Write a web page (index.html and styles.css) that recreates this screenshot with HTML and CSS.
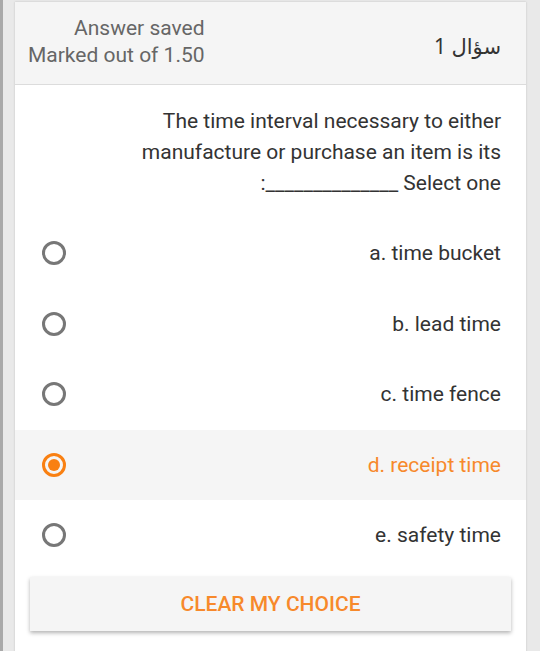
FILE: index.html
```html
<!DOCTYPE html>
<html lang="en">
<head>
<meta charset="utf-8">
<link rel="stylesheet" href="styles.css">
</head>
<body>
<div class="page">
  <div class="card">
    <div class="header">
      <div class="qno" dir="rtl">سؤال 1</div>
      <div class="state">
        <div>Answer saved</div>
        <div>Marked out of 1.50</div>
      </div>
    </div>
    <div class="qtext">
      <p>The time interval necessary to either manufacture or purchase an item is its<br>:______________ Select one</p>
    </div>
    <div class="answers">
      <div class="opt"><span class="radio"></span><span class="label">a. time bucket</span></div>
      <div class="opt"><span class="radio"></span><span class="label">b. lead time</span></div>
      <div class="opt"><span class="radio"></span><span class="label">c. time fence</span></div>
      <div class="opt selected"><span class="radio"></span><span class="label">d. receipt time</span></div>
      <div class="opt"><span class="radio"></span><span class="label">e. safety time</span></div>
    </div>
    <div class="actions">
      <div class="btn">CLEAR MY CHOICE</div>
    </div>
  </div>
</div>
</body>
</html>
```
FILE: styles.css
```css
html, body {
  margin: 0;
  padding: 0;
}
body {
  background: #e9e9e9;
  font-family: Roboto, "Noto Sans", sans-serif;
  height: 651px;
  overflow: hidden;
}
.page {
  border-left: 3px solid #a9a9a9;
  padding: 2px 14px 0 12px;
  height: 651px;
  box-sizing: border-box;
}
.card {
  background: #fff;
  box-shadow: 0 0 2px rgba(0,0,0,0.18);
  height: 700px;
}
.header {
  background: #f5f5f5;
  border-bottom: 1px solid #dcdcdc;
  height: 83px;
  box-sizing: border-box;
  display: flex;
  flex-direction: row-reverse;
  justify-content: space-between;
  align-items: center;
  padding: 0 25px 0 13px;
}
.state {
  text-align: right;
  color: #666;
  font-size: 21px;
  line-height: 27px;
  padding-bottom: 3px;
}
.qno {
  font-family: "Noto Sans", "DejaVu Sans", sans-serif;
  font-size: 21px;
  color: #333;
  padding-top: 6px;
}
.qtext {
  padding: 21px 25px 19px 25px;
  text-align: right;
  color: #333;
}
.qtext p {
  margin: 0;
  font-size: 21px;
  line-height: 31px;
  padding-left: 90px;
}
.answers {
  display: flex;
  flex-direction: column;
}
.opt {
  height: 70.5px;
  display: flex;
  justify-content: space-between;
  align-items: center;
  padding: 0 25px 0 27px;
  color: #333;
  font-size: 21px;
}
.opt.selected {
  background: #f5f5f5;
  color: #f7892b;
}
.radio {
  width: 24px;
  height: 24px;
  box-sizing: border-box;
  border: 3px solid #777;
  border-radius: 50%;
  display: flex;
  align-items: center;
  justify-content: center;
}
.opt.selected .radio {
  border-color: #f98012;
}
.opt.selected .radio::after {
  content: "";
  width: 12px;
  height: 12px;
  border-radius: 50%;
  background: #f98012;
}
.actions {
  padding: 6px 15px 0 15px;
}
.btn {
  background: #f5f5f5;
  height: 54px;
  display: flex;
  align-items: center;
  justify-content: center;
  color: #f7892b;
  font-weight: 500;
  font-size: 21px;
  box-shadow: 0 2px 4px rgba(0,0,0,0.3);
}
```
